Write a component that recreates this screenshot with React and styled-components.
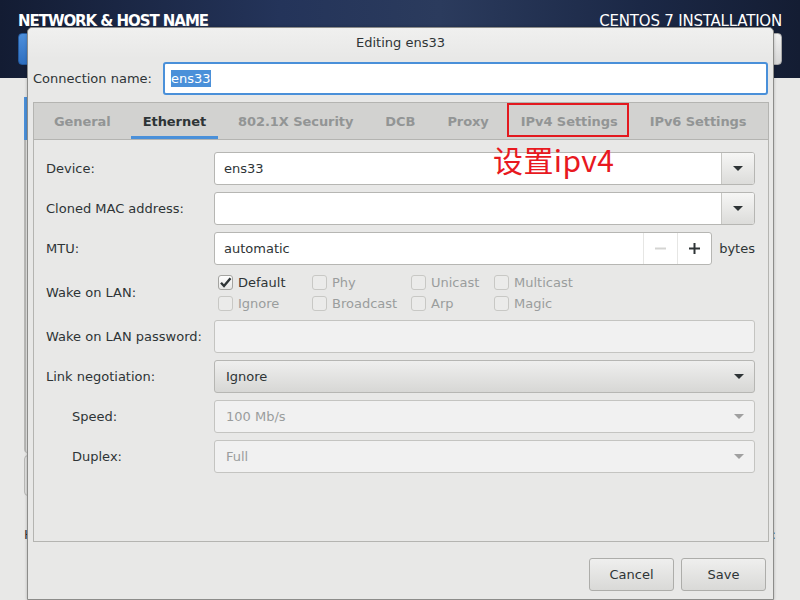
import React from "react";
import styled, { createGlobalStyle } from "styled-components";

const GlobalStyle = createGlobalStyle`
  html, body {
    margin: 0;
    padding: 0;
  }
  body {
    background: #e8e8e7;
    font-family: "DejaVu Sans", "Noto Sans", sans-serif;
    font-size: 13px;
    color: #2e3436;
  }
`;

const Screen = styled.div`
  position: relative;
  width: 800px;
  height: 600px;
  overflow: hidden;
  background: #e8e8e7;
`;

/* ---------- installer spoke behind the dialog ---------- */

const Header = styled.header`
  height: 78px;
  box-sizing: border-box;
  padding: 13px 18px 0 18px;
  display: flex;
  justify-content: space-between;
  background: linear-gradient(90deg, #131c33 0%, #24345a 35%, #2b3b5d 55%, #1b2846 80%, #141d33 100%);
`;

const HeaderSide = styled.div`
  display: flex;
  flex-direction: column;
  align-items: ${(p) => (p.$right ? "flex-end" : "flex-start")};
  gap: 3px;
`;

const SpokeTitle = styled.div`
  color: #ffffff;
  font-size: 15px;
  font-weight: ${(p) => (p.$bold ? "bold" : "normal")};
  letter-spacing: ${(p) => (p.$bold ? "-1.05px" : "-0.2px")};
  line-height: 17px;
`;

const HeaderButton = styled.div`
  width: 80px;
  height: 32px;
  border-radius: 4px;
  box-sizing: border-box;
  background: ${(p) =>
    p.$primary
      ? "linear-gradient(#4d8fdc, #2f6fc0)"
      : "linear-gradient(#f1f1f1, #d6d6d6)"};
  border: 1px solid ${(p) => (p.$primary ? "#23589c" : "#a8a8a8")};
`;

const SpokeBody = styled.div`
  padding: 19px 0 0 24px;
`;

const DeviceList = styled.div`
  width: 300px;
  height: 356px;
  border-left: 2px solid #b8b8b6;
  border-radius: 0 0 0 4px;
`;

const DeviceRow = styled.div`
  height: 43px;
  border-left: 3px solid #4a90d9;
  margin-left: -2px;
`;

const ListTools = styled.div`
  width: 60px;
  height: 41px;
  margin-top: 2px;
  border: 1px solid #b8b8b6;
  border-radius: 4px;
  box-sizing: border-box;
  background: #e0e0df;
`;

const HostRow = styled.div`
  margin-top: 31px;
  display: flex;
  justify-content: space-between;
  padding-right: 24px;
  line-height: 16px;
`;

/* ---------- dialog ---------- */

const Dialog = styled.div`
  position: absolute;
  left: 27px;
  top: 27px;
  width: 747px;
  height: 573px;
  box-sizing: border-box;
  border: 1px solid #8c8c8a;
  border-radius: 5px 5px 0 0;
  background: #e8e8e7;
  display: flex;
  flex-direction: column;
  padding: 0 4px 0 5px;
  box-shadow: 0 0 3px rgba(0, 0, 0, 0.25);
`;

const TitleBar = styled.div`
  height: 30px;
  margin: 0 -4px 0 -5px;
  display: flex;
  align-items: center;
  justify-content: center;
  padding-bottom: 2px;
  box-sizing: border-box;
  background: linear-gradient(#f0f0ef, #e8e8e7);
  border-radius: 5px 5px 0 0;
`;

const ConnectionRow = styled.div`
  margin-top: 4px;
  height: 33px;
  display: flex;
  align-items: center;
  gap: 11px;
`;

const NameEntry = styled.div`
  flex: 1;
  height: 33px;
  box-sizing: border-box;
  margin-right: 1px;
  border: 2px solid #4a90d9;
  border-radius: 3px;
  background: #ffffff;
  display: flex;
  align-items: center;
  padding-left: 6px;
`;

const Selected = styled.span`
  background: #4a90d9;
  color: #ffffff;
  line-height: 17px;
`;

const Notebook = styled.div`
  position: relative;
  margin-top: 7px;
  flex: 1;
  border: 1px solid #b4b4b1;
  display: flex;
  flex-direction: column;
`;

const TabBar = styled.div`
  height: 37px;
  box-sizing: border-box;
  display: flex;
  padding-left: 4px;
  background: #d2d2d0;
  border-bottom: 1px solid #b4b4b1;
`;

const Tab = styled.div`
  position: relative;
  margin: 0 4px;
  padding: 0 12px;
  display: flex;
  align-items: center;
  font-weight: bold;
  letter-spacing: -0.07px;
  color: ${(p) => (p.$active ? "#2e3436" : "#929595")};
  box-shadow: ${(p) => (p.$active ? "inset 0 -3px 0 #4a90d9" : "none")};

  &::after {
    content: "";
    display: ${(p) => (p.$marked ? "block" : "none")};
    position: absolute;
    left: -2px;
    right: 1px;
    top: 0;
    bottom: 2px;
    border: 2px solid #e3191f;
  }
`;

const Note = styled.div`
  position: absolute;
  left: 459px;
  top: 38px;
  color: #e8191f;
  font-family: "Noto Sans CJK SC", "Noto Sans", sans-serif;
  font-size: 30px;
  line-height: 36px;
  letter-spacing: 0.4px;
`;

const Form = styled.div`
  flex: 1;
  padding: 12px 13px 0 12px;
  display: grid;
  grid-template-columns: 168px 1fr;
  grid-template-rows: repeat(3, 33px) 41px repeat(4, 33px);
  row-gap: 7px;
  align-items: center;
  align-content: start;
`;

const Label = styled.div`
  padding-left: ${(p) => (p.$indent ? "26px" : "0")};
`;

const Field = styled.div`
  height: 33px;
  box-sizing: border-box;
  border: 1px solid ${(p) => (p.$disabled ? "#c4c4c1" : "#b6b6b3")};
  border-radius: 3px;
  display: flex;
  align-items: stretch;
  background: ${(p) =>
    p.$button
      ? "linear-gradient(#efefee, #d7d7d5)"
      : p.$disabled
      ? "#f1f1f1"
      : "#ffffff"};
  color: ${(p) => (p.$disabled ? "#9a9d9d" : "#2e3436")};
`;

const FieldText = styled.div`
  flex: 1;
  display: flex;
  align-items: center;
  padding-left: ${(p) => (p.$pad ? p.$pad : 9)}px;
`;

const DropButton = styled.div`
  width: 32px;
  display: flex;
  align-items: center;
  justify-content: center;
  border-left: ${(p) => (p.$split ? "1px solid #c6c6c3" : "none")};
  background: ${(p) => (p.$split ? "linear-gradient(#f6f6f5, #dcdcda)" : "transparent")};
  border-radius: 0 2px 2px 0;
`;

const Arrow = styled.span`
  width: 0;
  height: 0;
  border-left: 5px solid transparent;
  border-right: 5px solid transparent;
  border-top: 5px solid ${(p) => (p.$dim ? "#a0a0a0" : "#2e3436")};
  margin-left: ${(p) => (p.$shift ? p.$shift : 0)}px;
`;

const SpinRow = styled.div`
  display: flex;
  align-items: center;
  gap: 7px;
`;

const SpinField = styled(Field)`
  flex: 1;
`;

const SpinButton = styled.div`
  width: 33px;
  display: flex;
  align-items: center;
  justify-content: center;
  border-left: 1px solid #e6e6e4;
`;

const Checks = styled.div`
  display: grid;
  grid-template-columns: 94px 99px 83px auto;
  grid-auto-rows: 21px;
  align-content: center;
  margin-left: 4px;
`;

const CheckItem = styled.label`
  display: flex;
  align-items: center;
  gap: 5px;
  color: ${(p) => (p.$disabled ? "#9a9d9d" : "#2e3436")};
`;

const Box = styled.span`
  width: 15px;
  height: 15px;
  box-sizing: border-box;
  border: 1px solid ${(p) => (p.$disabled ? "#c8c8c5" : "#a4a4a1")};
  border-radius: 3px;
  background: ${(p) => (p.$disabled ? "#ebebea" : "linear-gradient(#fdfdfd, #e6e6e5)")};
  display: flex;
  align-items: center;
  justify-content: center;
`;

const Footer = styled.div`
  height: 57px;
  box-sizing: border-box;
  padding: 16px 3px 0 0;
  display: flex;
  justify-content: flex-end;
  gap: 7px;
`;

const Button = styled.div`
  width: 85px;
  height: 33px;
  box-sizing: border-box;
  border: 1px solid #adadaa;
  border-radius: 3px;
  background: linear-gradient(#efefee, #d9d9d7);
  display: flex;
  align-items: center;
  justify-content: center;
`;

const tabs = ["General", "Ethernet", "802.1X Security", "DCB", "Proxy", "IPv4 Settings", "IPv6 Settings"];

const wol = [
  ["Default", false, true],
  ["Phy", true],
  ["Unicast", true],
  ["Multicast", true],
  ["Ignore", true],
  ["Broadcast", true],
  ["Arp", true],
  ["Magic", true],
];

const Combo = ({ value, disabled, split, button }) => (
  <Field $disabled={disabled} $button={button}>
    <FieldText $pad={split ? 9 : 11}>{value}</FieldText>
    <DropButton $split={split}>
      <Arrow $dim={disabled} $shift={split ? 0 : 2} />
    </DropButton>
  </Field>
);

const Check = () => (
  <svg width="13" height="13" viewBox="0 0 13 13">
    <path d="M2 6.8 L5 10 L11.5 2.2" fill="none" stroke="#2e3436" strokeWidth="2.4" />
  </svg>
);

const PlusMinus = ({ plus }) => (
  <svg width="13" height="13" viewBox="0 0 13 13">
    <path d="M1 6.5 H12" stroke={plus ? "#2e3436" : "#d4d4d2"} strokeWidth="2" />
    {plus && <path d="M6.5 1 V12" stroke="#2e3436" strokeWidth="2" />}
  </svg>
);

export default function App() {
  return (
    <Screen>
      <GlobalStyle />
      <Header>
        <HeaderSide>
          <SpokeTitle $bold>NETWORK &amp; HOST NAME</SpokeTitle>
          <HeaderButton $primary />
        </HeaderSide>
        <HeaderSide $right>
          <SpokeTitle>CENTOS 7 INSTALLATION</SpokeTitle>
          <HeaderButton />
        </HeaderSide>
      </Header>
      <SpokeBody>
        <DeviceList>
          <DeviceRow />
        </DeviceList>
        <ListTools />
        <HostRow>
          <span>Host name:</span>
          <span>Current host name:</span>
        </HostRow>
      </SpokeBody>

      <Dialog>
        <TitleBar>Editing ens33</TitleBar>
        <ConnectionRow>
          <span>Connection name:</span>
          <NameEntry>
            <Selected>ens33</Selected>
          </NameEntry>
        </ConnectionRow>
        <Notebook>
          <TabBar>
            {tabs.map((t) => (
              <Tab key={t} $active={t === "Ethernet"} $marked={t === "IPv4 Settings"}>
                {t}
              </Tab>
            ))}
          </TabBar>
          <Note>设置ipv4</Note>
          <Form>
            <Label>Device:</Label>
            <Combo value="ens33" split />

            <Label>Cloned MAC address:</Label>
            <Combo value="" split />

            <Label>MTU:</Label>
            <SpinRow>
              <SpinField>
                <FieldText>automatic</FieldText>
                <SpinButton>
                  <PlusMinus />
                </SpinButton>
                <SpinButton>
                  <PlusMinus plus />
                </SpinButton>
              </SpinField>
              <span>bytes</span>
            </SpinRow>

            <Label>Wake on LAN:</Label>
            <Checks>
              {wol.map(([name, disabled, checked]) => (
                <CheckItem key={name} $disabled={disabled}>
                  <Box $disabled={disabled}>{checked && <Check />}</Box>
                  {name}
                </CheckItem>
              ))}
            </Checks>

            <Label>Wake on LAN password:</Label>
            <Field $disabled />

            <Label>Link negotiation:</Label>
            <Combo value="Ignore" button />

            <Label $indent>Speed:</Label>
            <Combo value="100 Mb/s" disabled />

            <Label $indent>Duplex:</Label>
            <Combo value="Full" disabled />
          </Form>
        </Notebook>
        <Footer>
          <Button>Cancel</Button>
          <Button>Save</Button>
        </Footer>
      </Dialog>
    </Screen>
  );
}
